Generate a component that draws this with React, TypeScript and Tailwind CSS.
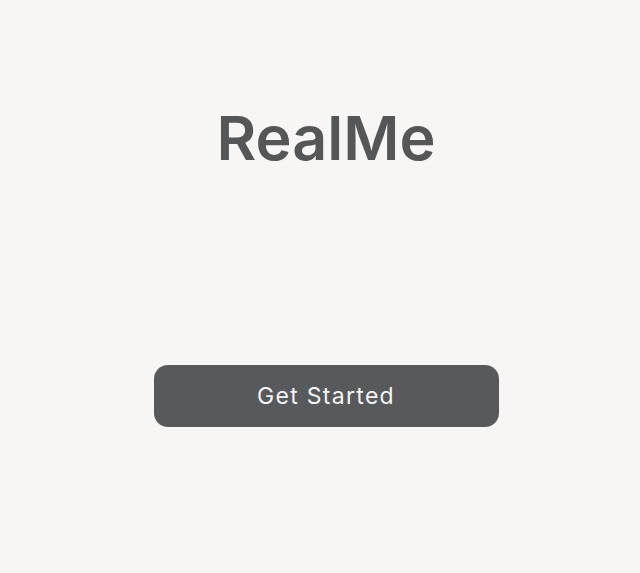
export default function App() {
  return (
    <div className="min-h-screen w-full bg-[#f7f6f4] flex flex-col items-center pl-3 font-['Inter','Noto_Sans',sans-serif]">
      <h1 className="mt-[101px] text-[61px] leading-[74px] font-semibold text-[#555658]">
        RealMe
      </h1>
      <button className="mt-[190px] w-[345px] h-[62px] rounded-[14px] bg-[#58595b] text-[#f4f4f4] text-[23px] tracking-[1.3px] font-normal">
        Get Started
      </button>
    </div>
  );
}
